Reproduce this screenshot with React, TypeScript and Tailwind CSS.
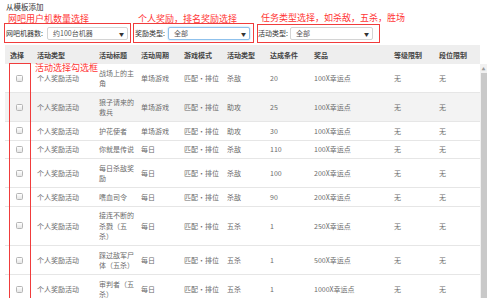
import React from 'react';

const font = "font-['Noto_Sans_CJK_SC','Noto_Sans',sans-serif]";

const headers = ['选择', '活动类型', '活动标题', '活动周期', '游戏模式', '活动类型', '达成条件', '奖品', '等级限制', '段位限制'];
const widths = ['w-[27px]', 'w-[62px]', 'w-[43px]', 'w-[43px]', 'w-[43px]', 'w-[43px]', 'w-[44px]', 'w-[79px]', 'w-[45px]', 'w-[46px]'];
const pads = ['pl-[5px]', 'pl-[5px]', 'pl-[5px] pr-[2px]', 'pl-[4px]', 'pl-[4px]', 'pl-[4px]', 'pl-[4px]', 'pl-[4px]', 'pl-[5px]', 'pl-[5px]'];

const rows = [
  ['战场上的主角', '单场游戏', '杀敌', '20', '100X幸运点'],
  ['狼子请来的救兵', '单场游戏', '助攻', '25', '100X幸运点'],
  ['护花使者', '单场游戏', '助攻', '30', '100X幸运点'],
  ['你就是传说', '每日', '杀敌', '110', '100X幸运点'],
  ['每日杀敌奖励', '每日', '杀敌', '100', '200X幸运点'],
  ['嗜血司令', '每日', '杀敌', '90', '200X幸运点'],
  ['接连不断的杀戮（五杀）', '每日', '五杀', '1', '250X幸运点'],
  ['踩过敌军尸体（五杀）', '每日', '五杀', '1', '500X幸运点'],
  ['审判者（五杀）', '每日', '五杀', '1', '1000X幸运点'],
];

function Cols() {
  return (
    <colgroup>
      {widths.map((w, i) => (
        <col key={i} className={w} />
      ))}
    </colgroup>
  );
}

function Select({ value, focus, width }: { value: string; focus?: boolean; width: string }) {
  return (
    <div
      className={`${width} h-[13px] flex items-center justify-between pl-[5px] pr-[3px] rounded-[2px] bg-white border ${
        focus ? 'border-[#8fc1ec] shadow-[0_0_2px_#9cc8ef]' : 'border-[#d4d4d4]'
      }`}
    >
      <span className="text-[7px] leading-none text-[#555]">{value}</span>
      <span className="text-[5px] leading-none text-[#333]">▼</span>
    </div>
  );
}

export default function App() {
  return (
    <div className={`relative w-[487px] h-[298px] overflow-hidden bg-white ${font}`}>
      <div className="h-[17px] pl-[6px] pt-[2px] text-[7.5px] leading-[10px] text-[#333]">从模板添加</div>

      <div className="flex items-center h-[13px] mt-[10px] text-[7px] leading-none text-[#333]">
        <div className="flex items-center w-[129px] pl-[6px]">
          <span className="w-[41px]">网吧机器数:</span>
          <Select value="约100台机器" width="w-[81px]" />
        </div>
        <div className="flex items-center w-[123px] pl-[6px]">
          <span className="w-[33px]">奖励类型:</span>
          <Select value="全部" focus width="w-[82px]" />
        </div>
        <div className="flex items-center pl-[6px]">
          <span className="w-[32px]">活动类型:</span>
          <Select value="全部" width="w-[83px]" />
        </div>
      </div>

      <div className="mt-[5px] pl-[5px] w-[480px]">
        <table className="table-fixed border-collapse w-[475px]">
          <Cols />
          <thead>
            <tr className="bg-[#eeeeee] h-[19px]">
              {headers.map((h, i) => (
                <th key={i} className={`${pads[i]} text-left font-semibold text-[7px] leading-[10px] text-[#444]`}>
                  {h}
                </th>
              ))}
            </tr>
          </thead>
        </table>
      </div>

      <div className="flex">
        <div className="pl-[5px] w-[480px]">
          <table className="table-fixed border-collapse w-[475px]">
            <Cols />
            <tbody>
              {rows.map((r, idx) => {
                const cells = ['', '个人奖励活动', r[0], r[1], '匹配·排位', r[2], r[3], r[4], '无', '无'];
                return (
                  <tr key={idx} className={`border-b border-[#e6e6e6] ${idx === 1 ? 'bg-[#f3f3f3]' : 'bg-white'}`}>
                    {cells.map((c, i) => (
                      <td key={i} className={`${pads[i]} py-[3.5px] align-middle text-[7px] leading-[10.5px] text-[#6b6b6b]`}>
                        {i === 0 ? (
                          <div className="w-[7px] h-[7px] ml-[6px] rounded-[1.5px] border border-[#b5b5b5] bg-gradient-to-b from-white to-[#e6e6e6]" />
                        ) : (
                          c
                        )}
                      </td>
                    ))}
                  </tr>
                );
              })}
            </tbody>
          </table>
        </div>
        <div className="w-[7px] h-[240px] bg-[#f1f1f1] flex flex-col">
          <div className="h-[9px] flex items-center justify-center text-[4px] text-[#999]">▲</div>
          <div className="flex-1 mx-[0.5px] bg-[#c9c9c9]" />
        </div>
      </div>

      {/* red annotations */}
      <div className="absolute left-[8px] top-[13px] text-[9px] leading-[11px] text-[#ff3535]">网吧用户机数量选择</div>
      <div className="absolute left-[138px] top-[13px] text-[9px] leading-[11px] text-[#ff3535]">个人奖励，排名奖励选择</div>
      <div className="absolute left-[261px] top-[12px] text-[9px] leading-[11px] text-[#ff3535]">任务类型选择，如杀敌，五杀，胜场</div>
      <div className="absolute left-[35px] top-[62px] text-[9px] leading-[11px] text-[#ff3535]">活动选择勾选框</div>

      <div className="absolute left-[4px] top-[23px] w-[127px] h-[20px] border-[1.5px] border-[#f03c3c]" />
      <div className="absolute left-[133px] top-[23px] w-[121px] h-[20px] border-[1.5px] border-[#f03c3c]" />
      <div className="absolute left-[257px] top-[24px] w-[123px] h-[19px] border-[1.5px] border-[#f03c3c]" />
      <div className="absolute left-[9px] top-[63px] w-[22px] h-[245px] border-[1.5px] border-[#f03c3c]" />
    </div>
  );
}
